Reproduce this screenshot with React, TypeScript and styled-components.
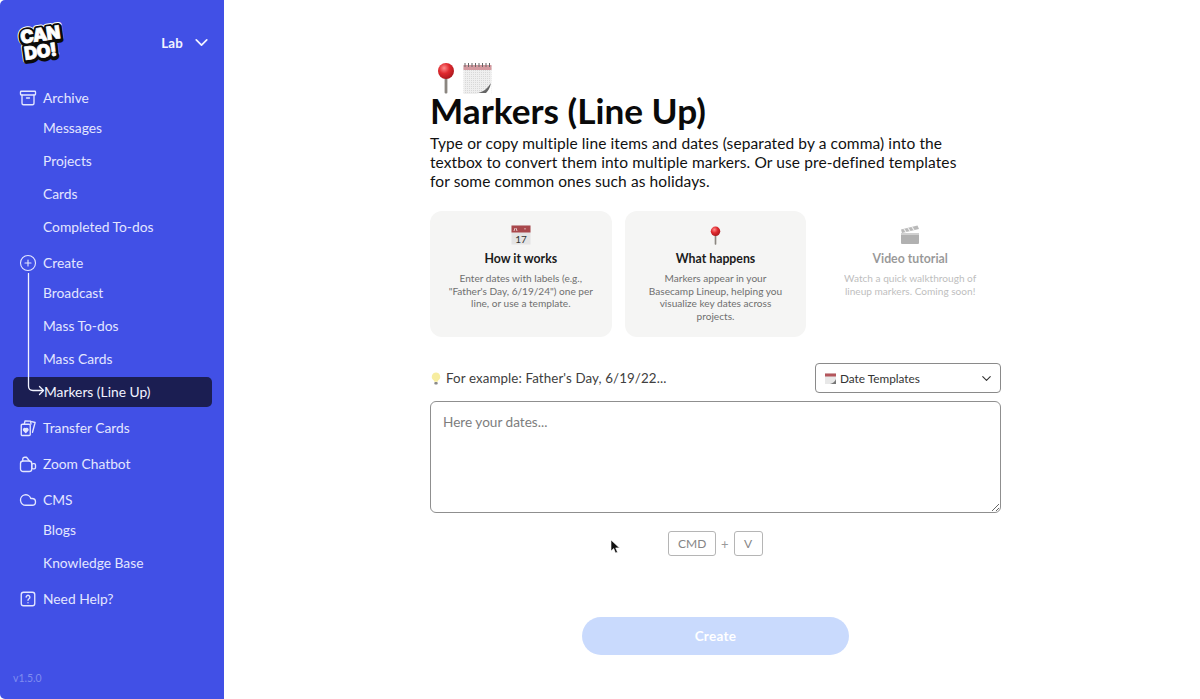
import React from "react";
import styled, { createGlobalStyle } from "styled-components";
import { Archive, ChevronDown, CirclePlus, Cloud } from "lucide-react";

const Global = createGlobalStyle`
  html, body { margin: 0; padding: 0; height: 100%; background: #fff; overflow: hidden; }
  body { font-family: "Lato", "Noto Sans", sans-serif; color: #0b0b0b; }
  #root { height: 100%; }
`;

const Page = styled.div`
  display: flex;
  height: 699px;
  width: 1200px;
  position: relative;
`;

const Sidebar = styled.aside`
  width: 224px;
  flex: none;
  box-sizing: border-box;
  background: #4150e6;
  border-radius: 5px 0 0 5px;
  padding: 17px 12px 0 13px;
  display: flex;
  flex-direction: column;
  color: #e3e6ff;
`;

const SideHead = styled.div`
  display: flex;
  align-items: center;
  justify-content: space-between;
  height: 50px;
  padding: 0 0 0 4px;
  margin-bottom: 17px;
`;

const Workspace = styled.div`
  display: flex;
  align-items: center;
  gap: 8px;
  padding-top: 1px;
  font-size: 13.300px;
  font-weight: 700;
  color: #f2f3ff;
  letter-spacing: 0.2px;
`;

const Nav = styled.nav`
  display: flex;
  flex-direction: column;
  gap: 9px;
`;

const Group = styled.div`
  display: flex;
  flex-direction: column;
  position: relative;
`;

const Parent = styled.div`
  height: 27px;
  display: flex;
  align-items: center;
  gap: 6px;
  padding-left: 6px;
  font-size: 13.800px;
  svg { flex: none; }
`;

const SubList = styled.div`
  display: flex;
  flex-direction: column;
  margin-bottom: -3px;
`;

const SubItem = styled.div<{ $active?: boolean }>`
  height: ${(p) => (p.$active ? "30px" : "33px")};
  margin: ${(p) => (p.$active ? "1.5px 0" : "0")};
  display: flex;
  align-items: center;
  padding-left: ${(p) => (p.$active ? "31px" : "30px")};
  font-size: 13.800px;
  border-radius: 5px;
  background: ${(p) => (p.$active ? "#1b1e52" : "transparent")};
  color: ${(p) => (p.$active ? "#f2f3ff" : "inherit")};
`;

const Connector = styled.svg`
  position: absolute;
  left: 13px;
  top: 24px;
  pointer-events: none;
`;

const Version = styled.div`
  margin-top: auto;
  margin-bottom: 15px;
  font-size: 10.500px;
  color: #7f8cf0;
`;

const Main = styled.main`
  flex: 1;
  box-sizing: border-box;
  padding: 62px 199px 0 206px;
  display: flex;
  flex-direction: column;
  min-width: 0;
`;

const EmojiRow = styled.div`
  display: flex;
  align-items: flex-end;
  gap: 8px;
  padding-left: 7px;
  height: 32px;
`;

const Title = styled.h1`
  margin: 0;
  font-size: 35.200px;
  line-height: 32px;
  font-weight: 700;
  color: #0a0a0a;
`;

const Lead = styled.p`
  margin: 8px 0 0;
  font-size: 15.500px;
  line-height: 19px;
  width: 540px;
  color: #111;
  letter-spacing: 0.1px;
`;

const Cards = styled.div`
  display: grid;
  grid-template-columns: repeat(3, 1fr);
  gap: 13px;
  margin-top: 20px;
`;

const Card = styled.div<{ $muted?: boolean }>`
  height: 126px;
  box-sizing: border-box;
  border-radius: 12px;
  padding: 13px 17.500px 0;
  background: ${(p) => (p.$muted ? "transparent" : "#f5f5f4")};
  display: flex;
  flex-direction: column;
  align-items: center;
  text-align: center;
  opacity: ${(p) => (p.$muted ? 0.45 : 1)};
`;

const CardIcon = styled.div`
  height: 22px;
  display: flex;
  align-items: center;
  justify-content: center;
`;

const CardTitle = styled.div`
  margin-top: 5px;
  font-size: 12.300px;
  line-height: 16px;
  font-weight: 700;
  color: #1b1b1b;
`;

const CardText = styled.div`
  margin-top: 5px;
  font-size: 10.100px;
  line-height: 12.600px;
  color: #6f6f6f;
`;

const ExampleRow = styled.div`
  display: flex;
  align-items: center;
  justify-content: space-between;
  margin-top: 26px;
  height: 30px;
`;

const Example = styled.div`
  display: flex;
  align-items: center;
  gap: 5px;
  padding-left: 1px;
  font-size: 13.350px;
  color: #404040;
  letter-spacing: 0.1px;
`;

const Select = styled.div`
  width: 186px;
  height: 30px;
  box-sizing: border-box;
  border: 1px solid #8a8a8a;
  border-radius: 4px;
  display: flex;
  align-items: center;
  padding: 0 6px 0 9px;
  gap: 4px;
  font-size: 11.800px;
  color: #333;
  span { flex: 1; }
`;

const Area = styled.textarea`
  margin-top: 8px;
  height: 112px;
  box-sizing: border-box;
  width: 100%;
  border: 1px solid #8f8f8f;
  border-radius: 6px;
  padding: 12px 12px;
  font-family: inherit;
  font-size: 13.600px;
  line-height: 17px;
  outline: none;
  &::placeholder { color: #7d7d7d; opacity: 1; }
`;

const Keys = styled.div`
  display: flex;
  justify-content: center;
  align-items: center;
  gap: 5px;
  margin-top: 18px;
  color: #9a9a9a;
  font-size: 13px;
`;

const Key = styled.div`
  height: 25px;
  min-width: 29px;
  box-sizing: border-box;
  padding: 0 8.500px;
  border: 1px solid #b5b5b5;
  border-radius: 3px;
  display: flex;
  align-items: center;
  justify-content: center;
  font-size: 12px;
  letter-spacing: 0.1px;
  color: #858585;
`;

const CreateButton = styled.button`
  align-self: center;
  margin-top: 61px;
  width: 267px;
  height: 38px;
  border: 0;
  border-radius: 19px;
  background: #c9dafd;
  color: #fff;
  font-family: inherit;
  font-size: 13.500px;
  font-weight: 700;
  letter-spacing: 0.3px;
`;

const Cursor = styled.svg`
  position: absolute;
  left: 610px;
  top: 539px;
`;

const LogoSvg = styled.svg`
  display: block;
`;

const logoFont = { fontFamily: "Inter, 'Liberation Sans', sans-serif", fontWeight: 900, fontSize: 18 };

const LogoWords = ({ dx = 0, dy = 0 }: { dx?: number; dy?: number }) => (
  <>
    <text x={24 + dx} y={21 + dy} textAnchor="middle" letterSpacing="-0.5" {...logoFont}>CAN</text>
    <text x={22 + dx} y={37.500 + dy} textAnchor="middle" letterSpacing="-0.5" {...logoFont}>DO!</text>
  </>
);

const Logo = () => (
  <LogoSvg width="48" height="44" viewBox="0 0 48 44">
    <g transform="rotate(-8 24 22)" strokeLinejoin="round">
      <g fill="#fff" stroke="#fff" strokeWidth="6.500"><LogoWords /></g>
      <g fill="#0b0b0b" stroke="#0b0b0b" strokeWidth="5.500"><LogoWords dx={0.5} dy={1.5} /></g>
      <g fill="#0b0b0b" stroke="#0b0b0b" strokeWidth="4.500"><LogoWords /></g>
      <g fill="#fff" stroke="#fff" strokeWidth="0.700"><LogoWords /></g>
    </g>
  </LogoSvg>
);

const Pin = ({ w = 18, h = 32, id }: { w?: number; h?: number; id: string }) => (
  <svg width={w} height={h} viewBox="0 0 18 32">
    <defs>
      <radialGradient id={id} cx="0.38" cy="0.32" r="0.75">
        <stop offset="0" stopColor="#ff8b8b" />
        <stop offset="0.45" stopColor="#e02a2f" />
        <stop offset="1" stopColor="#a3151b" />
      </radialGradient>
    </defs>
    <rect x="7.600" y="14" width="2.800" height="17.500" rx="1" fill="#8b8680" />
    <circle cx="9" cy="9" r="8" fill={`url(#${id})`} />
  </svg>
);

const Calendar = () => (
  <svg width="29" height="32" viewBox="0 0 29 32">
    <defs>
      <pattern id="paperDots" width="2" height="2" patternUnits="userSpaceOnUse">
        <rect width="2" height="2" fill="#efefef" />
        <rect width="1" height="1" fill="#d8d8d8" />
      </pattern>
    </defs>
    <rect x="0.500" y="3" width="28" height="29" fill="url(#paperDots)" />
    <rect x="0.500" y="3" width="28" height="5" fill="#d49aa0" />
    <path d="M2 1v4M5.500 1v4M9 1v4M12.500 1v4M16 1v4M19.500 1v4M23 1v4M26.500 1v4" stroke="#666" strokeWidth="1" />
    <path d="M13 32c6-1 12-6 15.500-12v12z" fill="#fff" />
    <path d="M15 31c5-1 9-4 13-10-1 5-3 8-5 10z" fill="#666" />
  </svg>
);

const SmallCalendar = () => (
  <svg width="20" height="20" viewBox="0 0 20 20">
    <rect x="0.500" y="0.500" width="19" height="19" fill="#e4e4e4" />
    <rect x="0.500" y="0.500" width="19" height="7" fill="#a9484c" />
    <path d="M4 3l-1 3M5 3l1 3M14 3v1.500" stroke="#fff" strokeWidth="0.700" />
    <text x="10" y="17.500" textAnchor="middle" fontFamily="Lato, sans-serif" fontSize="10" fill="#333">17</text>
  </svg>
);

const Clapper = () => (
  <svg width="20" height="20" viewBox="0 0 20 20">
    <rect x="1" y="8" width="18" height="11" rx="1" fill="#555" />
    <path d="M1 4.500L17.500 0.500 19 4 2 8z" fill="#666" />
    <path d="M4 4l2 3M8 3l2 3M12 2l2 3" stroke="#ddd" strokeWidth="1.300" />
    <path d="M1 8h18v2H1z" fill="#999" />
  </svg>
);

const Bulb = () => (
  <svg width="10" height="13" viewBox="0 0 10 13">
    <path d="M5 .5a4.300 4.300 0 0 0-2.400 7.800c.5.4.7 1 .7 1.500h3.400c0-.5.200-1.100.7-1.500A4.300 4.300 0 0 0 5 .5z" fill="#f7eda0" />
    <rect x="3.300" y="10" width="3.400" height="2.500" rx="1" fill="#8a8a8a" />
  </svg>
);

const TinyCalendar = () => (
  <svg width="11" height="11" viewBox="0 0 11 11">
    <rect x="0" y="0.500" width="11" height="10.500" fill="#e8e8e8" />
    <rect x="0" y="0.500" width="11" height="3" fill="#b4565c" />
    <path d="M5 11c3-.5 5-2.500 6-5v5z" fill="#777" />
  </svg>
);

const iconProps = { width: 18, height: 18, viewBox: "0 0 24 24", fill: "none", stroke: "currentColor", strokeWidth: 1.800, strokeLinecap: "round" as const, strokeLinejoin: "round" as const };

const CardsIcon = () => (
  <svg {...iconProps}>
    <rect x="3" y="7" width="12" height="15" rx="1.500" />
    <path d="M7 7l1-4.500 7.500.3.500 4M17 3.500l4.500 1.200-3.500 13" />
    <path d="M9 18l-2.800-2.900a1.700 1.700 0 0 1 2.800-1.900 1.700 1.700 0 0 1 2.800 1.900z" fill="currentColor" />
  </svg>
);

const VideoIcon = () => (
  <svg {...iconProps}>
    <path d="M5 8V5.500A2.500 2.500 0 0 1 7.500 3H10l4 5" />
    <rect x="2" y="8" width="15" height="14" rx="3.500" />
    <rect x="17" y="11.500" width="5" height="7" rx="1.800" />
  </svg>
);

const HelpIcon = () => (
  <svg {...iconProps}>
    <rect x="3" y="3" width="18" height="18" rx="3" />
    <path d="M9.500 9.500a2.500 2.500 0 1 1 3.800 2.200c-.8.500-1.300 1-1.300 2" />
    <path d="M12 17h.01" />
  </svg>
);

export default function App() {
  return (
    <Page>
      <Global />
      <Sidebar>
        <SideHead>
          <Logo />
          <Workspace>
            Lab
            <ChevronDown size={21} strokeWidth={2} />
          </Workspace>
        </SideHead>
        <Nav>
          <Group>
            <Parent><Archive size={18} strokeWidth={1.800} />Archive</Parent>
            <SubList>
              <SubItem>Messages</SubItem>
              <SubItem>Projects</SubItem>
              <SubItem>Cards</SubItem>
              <SubItem>Completed To-dos</SubItem>
            </SubList>
          </Group>
          <Group>
            <Parent><CirclePlus size={18} strokeWidth={1.500} />Create</Parent>
            <SubList>
              <SubItem>Broadcast</SubItem>
              <SubItem>Mass To-dos</SubItem>
              <SubItem>Mass Cards</SubItem>
              <SubItem $active>Markers (Line Up)</SubItem>
            </SubList>
            <Connector width="30" height="125" viewBox="0 0 30 125" fill="none" stroke="#f2f3ff" strokeWidth="1.300" strokeLinecap="round" strokeLinejoin="round">
              <path d="M2.500 .5V113q0 4.500 4.500 4.500H17" />
              <path d="M13.500 113.500l4 4-4 4" />
            </Connector>
          </Group>
          <Parent><CardsIcon />Transfer Cards</Parent>
          <Parent><VideoIcon />Zoom Chatbot</Parent>
          <Group>
            <Parent><Cloud size={18} strokeWidth={1.800} />CMS</Parent>
            <SubList>
              <SubItem>Blogs</SubItem>
              <SubItem>Knowledge Base</SubItem>
            </SubList>
          </Group>
          <Parent><HelpIcon />Need Help?</Parent>
        </Nav>
        <Version>v1.5.0</Version>
      </Sidebar>
      <Main>
        <EmojiRow>
          <Pin id="pinLarge" />
          <Calendar />
        </EmojiRow>
        <Title>Markers (Line Up)</Title>
        <Lead>
          Type or copy multiple line items and dates (separated by a comma) into the textbox to convert them into multiple markers. Or use pre-defined templates for some common ones such as holidays.
        </Lead>
        <Cards>
          <Card>
            <CardIcon><SmallCalendar /></CardIcon>
            <CardTitle>How it works</CardTitle>
            <CardText>Enter dates with labels (e.g., "Father's Day, 6/19/24") one per line, or use a template.</CardText>
          </Card>
          <Card>
            <CardIcon><Pin id="pinSmall" w={11} h={19} /></CardIcon>
            <CardTitle>What happens</CardTitle>
            <CardText>Markers appear in your Basecamp Lineup, helping you visualize key dates across projects.</CardText>
          </Card>
          <Card $muted>
            <CardIcon><Clapper /></CardIcon>
            <CardTitle>Video tutorial</CardTitle>
            <CardText>Watch a quick walkthrough of lineup markers. Coming soon!</CardText>
          </Card>
        </Cards>
        <ExampleRow>
          <Example><Bulb />For example: Father's Day, 6/19/22...</Example>
          <Select>
            <TinyCalendar />
            <span>Date Templates</span>
            <ChevronDown size={15} strokeWidth={1.800} />
          </Select>
        </ExampleRow>
        <Area placeholder="Here your dates..." />
        <Keys>
          <Key>CMD</Key>
          +
          <Key>V</Key>
        </Keys>
        <CreateButton>Create</CreateButton>
      </Main>
      <Cursor width="12" height="15" viewBox="0 0 12 15">
        <path d="M1 1v11l2.700-2.500L5.500 14l2-.8-1.800-4.300H9.500z" fill="#111" stroke="#fff" strokeWidth="0.600" />
      </Cursor>
    </Page>
  );
}
